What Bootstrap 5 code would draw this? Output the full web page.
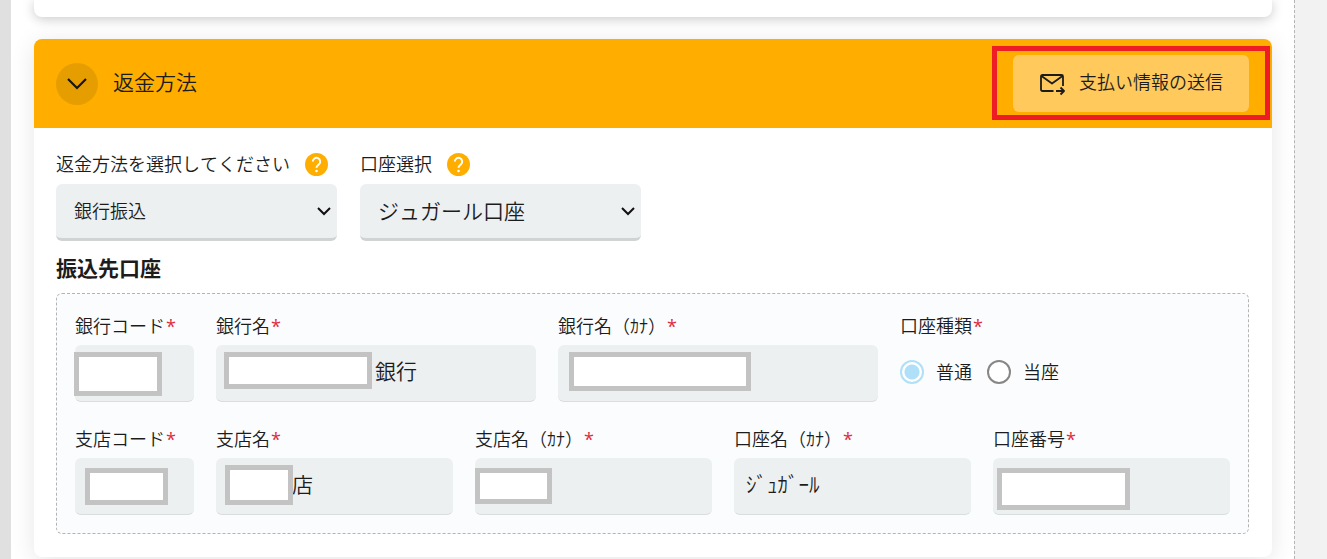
<!DOCTYPE html>
<html lang="ja">
<head>
<meta charset="utf-8">
<meta name="viewport" content="width=device-width, initial-scale=1">
<title>返金方法</title>
<link href="https://cdn.jsdelivr.net/npm/bootstrap@5.3.0/dist/css/bootstrap.min.css" rel="stylesheet">
<style>
  body { font-family: "Noto Sans CJK JP", sans-serif; font-weight: 350; font-kerning: none; font-size: 18px; line-height: 27px; color: #1c1c1c; background: #fff; }
  input, select, button { font-kerning: none; }
  .rail-start { width: 11px; background: #e0e0e0; }
  .rail-end { width: 33px; background: #f2f2f2; border-left: 1px dashed #b4b4b4; }
  .content-area { padding: 0 22px 0 23px; min-width: 0; }
  .panel { background: #fff; border-radius: 8px; box-shadow: 0 2px 12px rgba(0,0,0,.22); }
  .panel-prev { height: 17px; border-radius: 0 0 8px 8px; margin-bottom: 22px; }
  .panel-main { box-shadow: 0 4px 24px rgba(0,0,0,.1); }
  .panel-head { background: #ffae00; border-radius: 8px 8px 0 0; padding: 16px 23px 16px 22px; }
  .panel-title { font-size: 21px; line-height: 30px; font-weight: 350; margin: 0 0 6px; }
  .panel-body { padding: 20px 23px 23px 22px; }
  .toggle-btn { width: 42px; height: 42px; border: 0; border-radius: 50%; background: #e69d00; margin-right: 15px; }
  .send-btn { height: 57px; width: 236px; border: 0; border-radius: 6px; background: #ffc95c; color: #1c1c1c; gap: 14px; font-weight: 350; }
  .send-label { margin-bottom: 4px; }
  .highlight { position: absolute; inset: -9px -21px -8px; border: 5px solid #ee1c25; pointer-events: none; }
  .method-list { column-gap: 23px; }
  .method-group { width: 281px; }
  .label-row { height: 30px; margin-bottom: 6px; gap: 15px; }
  .label-row svg { margin-top: 2px; }
  .select-box { width: 100%; height: 57px; border: 0; border-bottom: 3px solid #d0d3d3; border-radius: 6px; padding: 0 36px 2px 18px; color: #1c1c1c; font-weight: 350; appearance: none;
    background: #edf0f1 url("data:image/svg+xml,%3Csvg xmlns='http://www.w3.org/2000/svg' viewBox='0 0 14 10'%3E%3Cpath d='M1 2l6 6 6-6' fill='none' stroke='%23111' stroke-width='2'/%3E%3C/svg%3E") no-repeat right 6px center / 14px 10px; }
  .text-lg { font-size: 21px; }
  .sub-title { font-size: 21px; line-height: 30px; font-weight: 700; margin: 11px 0; }
  .account-box { background: #fbfcfe; border: 1px dashed #b4b4b4; border-radius: 6px; padding: 18px; }
  .account-row { display: grid; gap: 22px; }
  .bank-row { grid-template-columns: 119px 320fr 320fr 330fr; margin-bottom: 23px; }
  .branch-row { grid-template-columns: 119px repeat(4, 1fr); }
  .field-label { display: block; height: 27px; margin-bottom: 6px; white-space: nowrap; font-size: 18px; line-height: 27px; float: none; }
  .req { color: #e02b3c; padding-left: 1px; font-family: "Open Sans", sans-serif; font-weight: 400; line-height: 1; }
  .text-box { width: 100%; height: 57px; border: 0; border-bottom: 1px solid #dadddd; border-radius: 6px; background: #edf0f1; padding: 0 12px 6px; font-size: 21px; font-weight: 350; color: #1c1c1c; }
  .after-long { padding-left: 159px; }
  .after-short { padding-left: 76px; }
  .mask { position: absolute; background: #fff; border: 5px solid #c3c3c3; }
  .mask-bank-code { left: -1px; top: 7px; width: 88px; height: 44px; }
  .mask-bank { left: 8px; top: 7px; width: 148px; height: 37px; }
  .mask-bank-kana { left: 11px; top: 7px; width: 182px; height: 39px; }
  .mask-branch-code { left: 10px; top: 10px; width: 83px; height: 37px; }
  .mask-branch { left: 9px; top: 7px; width: 68px; height: 40px; }
  .mask-branch-kana { left: 0; top: 10px; width: 77px; height: 36px; }
  .mask-number { left: 4px; top: 10px; width: 133px; height: 42px; }
  .radio-row { height: 53px; }
  .radio-dot { appearance: none; width: 24px; height: 24px; border: 2px solid #878787; border-radius: 50%; background: #fff; margin: 0 12px 0 0; }
  .radio-dot:checked { border-color: #b0e0f8; background: radial-gradient(circle, #b0e0f8 7px, #fff 8px); }
  .radio-label { margin: 0 15px 0 0; }
</style>
</head>
<body>
<div class="d-flex min-vh-100">
  <div class="rail-start flex-shrink-0"></div>
  <main class="content-area flex-grow-1">
    <div class="panel panel-prev"></div>
    <section class="panel panel-main">
      <header class="panel-head d-flex align-items-center">
        <button type="button" class="toggle-btn p-0 d-flex align-items-center justify-content-center" aria-label="開閉">
          <svg width="22" height="14" viewBox="0 0 22 14" fill="none" stroke="#151515" stroke-width="2.2"><path d="M2 2l9 9 9-9"/></svg>
        </button>
        <h2 class="panel-title">返金方法</h2>
        <div class="position-relative ms-auto">
          <button type="button" class="send-btn d-flex align-items-center justify-content-center">
            <svg width="26" height="24" viewBox="0 0 26 24" fill="none" stroke="#1c1c1c" stroke-width="1.8" stroke-linejoin="round"><path d="M14.500 19H3.500Q2 19 2 17.500V4.500Q2 3 3.500 3H22.500Q24 3 24 4.500V14"/><path d="M2.500 4L13 11.500 23.500 4"/><path d="M17 19H25M21.500 15.500L25 19l-3.500 3.500"/></svg>
            <span class="send-label">支払い情報の送信</span>
          </button>
          <div class="highlight"></div>
        </div>
      </header>
      <div class="panel-body">
        <div class="method-list d-flex flex-wrap">
          <div class="method-group">
            <div class="label-row d-flex align-items-center">
              <label for="method">返金方法を選択してください</label>
              <svg width="23" height="23" viewBox="0 0 23 23"><circle cx="11.500" cy="11.500" r="11.500" fill="#ffae00"/><path d="M7.800 8.600a3.700 3.700 0 1 1 6.200 2.700c-1.500 1.300-2.500 1.700-2.500 3.500" fill="none" stroke="#fff" stroke-width="2"/><circle cx="11.500" cy="18" r="1.300" fill="#fff"/></svg>
            </div>
            <select id="method" class="select-box"><option>銀行振込</option></select>
          </div>
          <div class="method-group">
            <div class="label-row d-flex align-items-center">
              <label for="account">口座選択</label>
              <svg width="23" height="23" viewBox="0 0 23 23"><circle cx="11.500" cy="11.500" r="11.500" fill="#ffae00"/><path d="M7.800 8.600a3.700 3.700 0 1 1 6.200 2.700c-1.500 1.300-2.500 1.700-2.500 3.500" fill="none" stroke="#fff" stroke-width="2"/><circle cx="11.500" cy="18" r="1.300" fill="#fff"/></svg>
            </div>
            <select id="account" class="select-box text-lg"><option>ジュガール口座</option></select>
          </div>
        </div>
        <h3 class="sub-title">振込先口座</h3>
        <div class="account-box">
          <div class="account-row bank-row">
            <div>
              <label class="field-label" for="bank-code">銀行コード<span class="req">*</span></label>
              <div class="position-relative"><input id="bank-code" class="text-box d-block" type="text"><div class="mask mask-bank-code"></div></div>
            </div>
            <div>
              <label class="field-label" for="bank">銀行名<span class="req">*</span></label>
              <div class="position-relative"><input id="bank" class="text-box after-long d-block" type="text" value="銀行"><div class="mask mask-bank"></div></div>
            </div>
            <div>
              <label class="field-label" for="bank-kana">銀行名（ｶﾅ）<span class="req">*</span></label>
              <div class="position-relative"><input id="bank-kana" class="text-box d-block" type="text"><div class="mask mask-bank-kana"></div></div>
            </div>
            <fieldset>
              <legend class="field-label">口座種類<span class="req">*</span></legend>
              <div class="radio-row d-flex align-items-center">
                <input class="radio-dot" type="radio" name="kind" id="kind-normal" checked><label class="radio-label" for="kind-normal">普通</label>
                <input class="radio-dot" type="radio" name="kind" id="kind-current"><label class="radio-label" for="kind-current">当座</label>
              </div>
            </fieldset>
          </div>
          <div class="account-row branch-row">
            <div>
              <label class="field-label" for="branch-code">支店コード<span class="req">*</span></label>
              <div class="position-relative"><input id="branch-code" class="text-box d-block" type="text"><div class="mask mask-branch-code"></div></div>
            </div>
            <div>
              <label class="field-label" for="branch">支店名<span class="req">*</span></label>
              <div class="position-relative"><input id="branch" class="text-box after-short d-block" type="text" value="店"><div class="mask mask-branch"></div></div>
            </div>
            <div>
              <label class="field-label" for="branch-kana">支店名（ｶﾅ）<span class="req">*</span></label>
              <div class="position-relative"><input id="branch-kana" class="text-box d-block" type="text"><div class="mask mask-branch-kana"></div></div>
            </div>
            <div>
              <label class="field-label" for="holder">口座名（ｶﾅ）<span class="req">*</span></label>
              <input id="holder" class="text-box d-block" type="text" value="ｼﾞｭｶﾞｰﾙ">
            </div>
            <div>
              <label class="field-label" for="number">口座番号<span class="req">*</span></label>
              <div class="position-relative"><input id="number" class="text-box d-block" type="text"><div class="mask mask-number"></div></div>
            </div>
          </div>
        </div>
      </div>
    </section>
  </main>
  <div class="rail-end flex-shrink-0"></div>
</div>
</body>
</html>
